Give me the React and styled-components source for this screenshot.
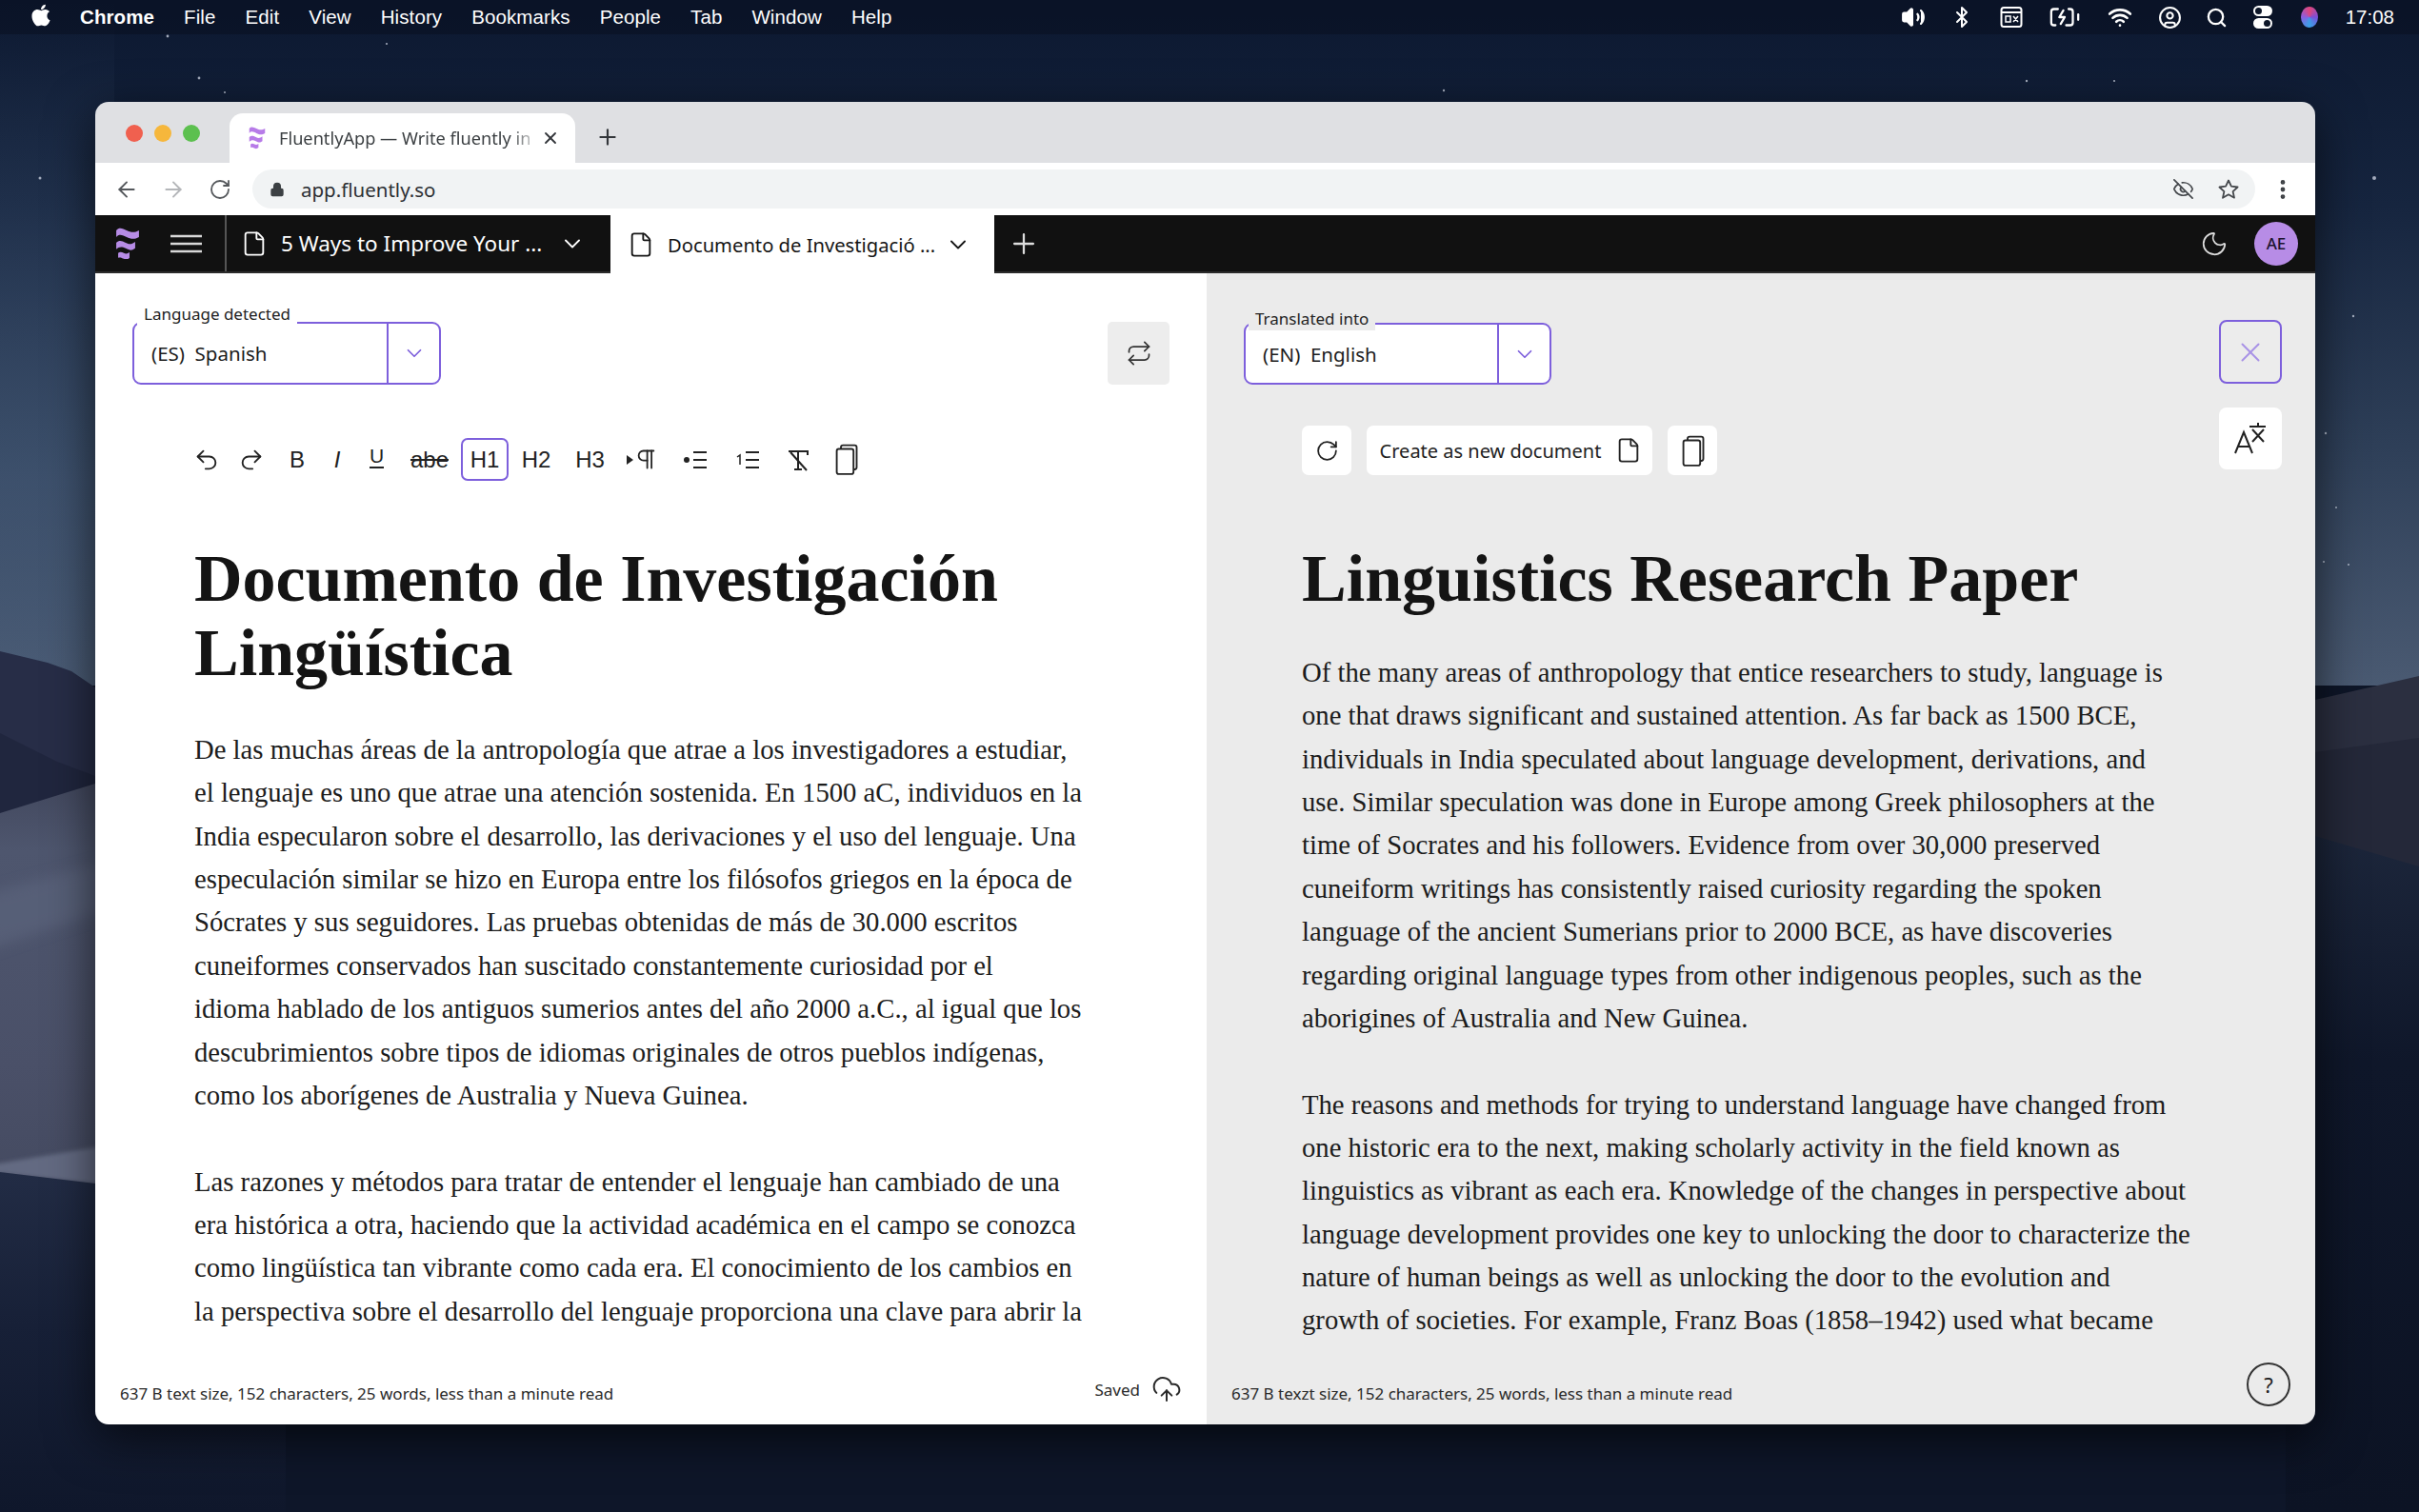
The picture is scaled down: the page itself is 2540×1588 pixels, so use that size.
import styled, { createGlobalStyle } from "styled-components";
import {
  ArrowLeft, ArrowRight, BatteryCharging, Bluetooth, ChevronDown, CircleUser, CloudUpload, EyeOff, File,
  Lock, Moon, MoreVertical, Pilcrow, Plus, Redo2, Repeat, RotateCw, Search, Undo2, Volume2, Wifi, X,
} from "lucide-react";
import { FaApple } from "react-icons/fa";

const Global = createGlobalStyle`
  html, body { margin: 0; padding: 0; background: #0e1628; }
  * { box-sizing: border-box; }
`;

const uiFont = `"Noto Sans", "Open Sans", sans-serif`;
const serifFont = `"Liberation Serif", serif`;
const purple = "#7d5fdc";

const Desktop = styled.div`
  position: relative;
  width: 2540px;
  height: 1588px;
  overflow: hidden;
  display: flex;
  flex-direction: column;
  font-family: ${uiFont};
`;

const Wallpaper = styled.svg`
  position: absolute;
  top: 0;
  left: 0;
  width: 100%;
  height: 100%;
`;

const MenuBar = styled.header`
  position: relative;
  height: 36px;
  flex: none;
  display: flex;
  align-items: center;
  justify-content: space-between;
  padding: 0 26px 0 30px;
  background: rgba(8, 14, 30, 0.5);
  color: #fff;
`;

const MenuLeft = styled.nav`
  display: flex;
  align-items: center;
  gap: 31px;
`;

const AppleMark = styled(FaApple)`
  width: 26px;
  height: 26px;
  margin-right: -3px;
  margin-top: -4px;
`;

const MenuItem = styled.span`
  font-family: "Liberation Sans", sans-serif;
  font-size: 20.5px;
  font-weight: ${(p) => (p.$bold ? 700 : 400)};
  letter-spacing: 0.1px;
`;

const MenuRight = styled.div`
  display: flex;
  align-items: center;
`;

const StatusSlot = styled.span`
  width: ${(p) => p.$w}px;
  display: flex;
  justify-content: center;
  align-items: center;
`;

const Siri = styled.span`
  width: 18px;
  height: 22px;
  border-radius: 50%;
  background: conic-gradient(#e0467c, #7a4fd8, #3aa0e8, #8a5fe0, #e0467c);
`;

const Clock = styled.span`
  margin-left: 14px;
  font-family: "Liberation Sans", sans-serif;
  font-size: 20.5px;
`;

const Window = styled.main`
  position: relative;
  margin: 71px 0 0 100px;
  width: 2331px;
  height: 1389px;
  display: flex;
  flex-direction: column;
  border-radius: 14px;
  overflow: hidden;
  box-shadow: 0 14px 50px rgba(0, 0, 0, 0.65);
`;

const TabStrip = styled.div`
  height: 64px;
  flex: none;
  display: flex;
  align-items: flex-end;
  background: #dfe0e3;
`;

const Lights = styled.div`
  display: flex;
  gap: 12px;
  align-self: flex-start;
  margin: 24px 31px 0 32px;
`;

const Light = styled.span`
  width: 18px;
  height: 18px;
  border-radius: 50%;
  background: ${(p) => p.$c};
`;

const BrowserTab = styled.div`
  width: 363px;
  height: 52px;
  display: flex;
  align-items: center;
  padding: 0 16px 0 20px;
  background: #fff;
  border-radius: 14px 14px 0 0;
`;

const TabTitle = styled.span`
  flex: 1;
  margin-left: 14px;
  white-space: nowrap;
  font-size: 18.2px;
  color: #3c4043;
  mask-image: linear-gradient(to right, #000 88%, transparent 100%);
`;

const NewTabButton = styled.span`
  display: flex;
  margin: 0 0 14px 21px;
  color: #33363a;
`;

const AddressRow = styled.div`
  height: 55px;
  flex: none;
  display: flex;
  align-items: center;
  padding-left: 8px;
  background: #fff;
`;

const NavIcon = styled.span`
  width: 49px;
  display: flex;
  justify-content: center;
  margin-right: ${(p) => p.$end || 0}px;
  color: ${(p) => (p.$off ? "#b4b6b9" : "#55585c")};
`;

const AddressPill = styled.div`
  width: 2103px;
  height: 41px;
  display: flex;
  align-items: center;
  padding: 0 16px 0 18px;
  border-radius: 21px;
  background: #f1f3f4;
  color: #3c4043;
`;

const Url = styled.span`
  flex: 1;
  margin-left: 17px;
  font-size: 20.5px;
  color: #2c2f33;
`;

const PillIcon = styled.span`
  display: flex;
  margin-left: 24px;
  color: #45484c;
`;

const MoreButton = styled.span`
  display: flex;
  margin-left: 16px;
  color: #3d4044;
`;

const AppBar = styled.div`
  height: 61px;
  flex: none;
  display: flex;
  align-items: stretch;
  background: #111;
  border-bottom: 2px solid #2b2b2b;
  color: #fff;
`;

const BrandBox = styled.div`
  width: 138px;
  display: flex;
  align-items: center;
  gap: 32px;
  padding-left: 21px;
  border-right: 2px solid #555;
  color: #d8d8d8;
`;

const DocTab = styled.div`
  width: ${(p) => p.$w}px;
  display: flex;
  align-items: center;
  padding-left: ${(p) => (p.$active ? 18 : 15)}px;
  background: ${(p) => (p.$active ? "#fff" : "#111")};
  color: ${(p) => (p.$active ? "#151515" : "#fff")};
  height: ${(p) => (p.$active ? "61px" : "auto")};
  position: relative;
`;

const DocTabName = styled.span`
  width: ${(p) => p.$w}px;
  margin-left: ${(p) => p.$gap}px;
  white-space: nowrap;
  font-size: ${(p) => p.$size}px;
`;

const AddDoc = styled.span`
  display: flex;
  align-items: center;
  margin-left: 14px;
  color: #ddd;
`;

const AppBarEnd = styled.div`
  margin-left: auto;
  display: flex;
  align-items: center;
  gap: 27px;
  padding-right: 18px;
  color: #ddd;
`;

const Avatar = styled.span`
  width: 46px;
  height: 46px;
  display: flex;
  align-items: center;
  justify-content: center;
  border-radius: 50%;
  background: #b78ce6;
  color: #1d1430;
  font-size: 17px;
  font-weight: 500;
`;

const Panels = styled.div`
  flex: 1;
  min-height: 0;
  display: grid;
  grid-template-columns: 1167px 1164px;
`;

const Panel = styled.section`
  position: relative;
  min-height: 0;
  display: flex;
  flex-direction: column;
  padding-top: ${(p) => p.$top}px;
  background: ${(p) => p.$bg};
`;

const PanelHead = styled.div`
  flex: none;
  display: flex;
  justify-content: space-between;
  padding: 0 39px;
`;

const SelectBox = styled.div`
  position: relative;
  width: ${(p) => p.$w}px;
  height: ${(p) => p.$h}px;
  display: flex;
  align-items: stretch;
  background: ${(p) => p.$fill};
  border: 2px solid ${purple};
  border-radius: 9px;
`;

const SelectLabel = styled.span`
  position: absolute;
  top: ${(p) => p.$top}px;
  left: 3px;
  padding: 0 7px;
  background: ${(p) => p.$bg};
  font-size: 17px;
  line-height: 24px;
  color: #222;
  white-space: nowrap;
`;

const SelectValue = styled.span`
  flex: 1;
  display: flex;
  align-items: center;
  padding-left: 18px;
  font-size: 20.5px;
  color: #1c1c1c;
  white-space: pre;
`;

const SelectArrow = styled.span`
  width: 55px;
  display: flex;
  align-items: center;
  justify-content: center;
  border-left: 2px solid ${purple};
  color: ${purple};
`;

const SwapButton = styled.button`
  width: 65px;
  height: 66px;
  display: flex;
  align-items: center;
  justify-content: center;
  padding: 0;
  border: 0;
  border-radius: 5px;
  background: #ededed;
  color: #333;
`;

const FormatBar = styled.div`
  flex: none;
  display: flex;
  align-items: center;
  height: 45px;
  margin: 56px 0 0 94px;
  color: #222;
`;

const FormatItem = styled.span`
  width: ${(p) => p.$w}px;
  height: 45px;
  display: flex;
  align-items: center;
  justify-content: center;
  font-family: "Liberation Sans", sans-serif;
  font-size: 24px;
  color: #222;
  border-radius: 7px;
  border: ${(p) => (p.$active ? `2px solid ${purple}` : "0")};
  font-style: ${(p) => (p.$italic ? "italic" : "normal")};
  text-decoration: ${(p) => p.$deco || "none"};
`;

const UnderlineMark = styled.span`
  border-bottom: 2px solid #222;
  font-size: 21px;
  line-height: 22px;
  margin-top: -6px;
`;

const Doc = styled.article`
  flex: 1;
  min-height: 0;
  overflow: hidden;
  padding-left: ${(p) => p.$left}px;
  margin-top: ${(p) => p.$top}px;
`;

const Title = styled.h1`
  margin: 0 0 ${(p) => p.$gap}px;
  font-family: ${serifFont};
  font-size: 70px;
  line-height: 78px;
  font-weight: 700;
  color: #141414;
  white-space: nowrap;
`;

const TitleLine = styled.span`
  display: block;
`;

const Para = styled.p`
  margin: 0 0 45.36px;
  font-family: ${serifFont};
  font-size: 28.7px;
  line-height: 45.36px;
  color: #1c1c1c;
`;

const ParaLine = styled.span`
  display: block;
  white-space: nowrap;
`;

const PanelFoot = styled.footer`
  height: 82px;
  flex: none;
  display: flex;
  align-items: center;
  justify-content: space-between;
  padding: 0 26px;
  font-size: 17px;
  color: #2a2a2a;
`;

const FootText = styled.span`
  padding-top: 16px;
`;

const SavedState = styled.span`
  display: flex;
  align-items: center;
  gap: 12px;
  padding-top: 8px;
`;

const HelpCircle = styled.span`
  width: 46px;
  height: 46px;
  display: flex;
  align-items: center;
  justify-content: center;
  border: 2px solid #333;
  border-radius: 50%;
  font-size: 22px;
  color: #222;
  margin-top: -2px;
`;

const ResultTools = styled.div`
  flex: none;
  display: flex;
  gap: 16px;
  height: 52px;
  margin: 43px 0 0 100px;
`;

const WhiteButton = styled.button`
  height: 52px;
  width: ${(p) => p.$w}px;
  display: flex;
  align-items: center;
  justify-content: center;
  gap: 15px;
  padding: 0 0 0 ${(p) => p.$shift || 0}px;
  border: 0;
  border-radius: 7px;
  background: #fff;
  font-family: ${uiFont};
  font-size: 20px;
  color: #222;
`;

const SideActions = styled.div`
  position: absolute;
  top: 49px;
  right: 35px;
  display: flex;
  flex-direction: column;
  gap: 25px;
`;

const SideButton = styled.button`
  width: 66px;
  height: ${(p) => p.$h}px;
  display: flex;
  align-items: center;
  justify-content: center;
  padding: 0;
  border: ${(p) => (p.$outlined ? `2px solid ${purple}` : "0")};
  border-radius: 8px;
  background: ${(p) => (p.$outlined ? "#ececec" : "#fff")};
  color: ${(p) => (p.$outlined ? "#a892e6" : "#222")};
`;

const sourceLines = [
  [
    "De las muchas áreas de la antropología que atrae a los investigadores a estudiar,",
    "el lenguaje es uno que atrae una atención sostenida. En 1500 aC, individuos en la",
    "India especularon sobre el desarrollo, las derivaciones y el uso del lenguaje. Una",
    "especulación similar se hizo en Europa entre los filósofos griegos en la época de",
    "Sócrates y sus seguidores. Las pruebas obtenidas de más de 30.000 escritos",
    "cuneiformes conservados han suscitado constantemente curiosidad por el",
    "idioma hablado de los antiguos sumerios antes del año 2000 a.C., al igual que los",
    "descubrimientos sobre tipos de idiomas originales de otros pueblos indígenas,",
    "como los aborígenes de Australia y Nueva Guinea.",
  ],
  [
    "Las razones y métodos para tratar de entender el lenguaje han cambiado de una",
    "era histórica a otra, haciendo que la actividad académica en el campo se conozca",
    "como lingüística tan vibrante como cada era. El conocimiento de los cambios en",
    "la perspectiva sobre el desarrollo del lenguaje proporciona una clave para abrir la",
  ],
];

const targetLines = [
  [
    "Of the many areas of anthropology that entice researchers to study, language is",
    "one that draws significant and sustained attention. As far back as 1500 BCE,",
    "individuals in India speculated about language development, derivations, and",
    "use. Similar speculation was done in Europe among Greek philosophers at the",
    "time of Socrates and his followers. Evidence from over 30,000 preserved",
    "cuneiform writings has consistently raised curiosity regarding the spoken",
    "language of the ancient Sumerians prior to 2000 BCE, as have discoveries",
    "regarding original language types from other indigenous peoples, such as the",
    "aborigines of Australia and New Guinea.",
  ],
  [
    "The reasons and methods for trying to understand language have changed from",
    "one historic era to the next, making scholarly activity in the field known as",
    "linguistics as vibrant as each era. Knowledge of the changes in perspective about",
    "language development provides one key to unlocking the door to characterize the",
    "nature of human beings as well as unlocking the door to the evolution and",
    "growth of societies. For example, Franz Boas (1858–1942) used what became",
  ],
];

const stars = [
  [176, 38, 1.4], [209, 82, 1.4], [236, 97, 1.1], [406, 46, 1.1], [42, 187, 1.5],
  [1516, 95, 1.2], [2128, 85, 1.2], [2220, 85, 1.1],
  [2493, 187, 2], [2471, 332, 1.2], [2442, 455, 1.2], [2453, 533, 1], [2440, 590, 1.1], [2466, 593, 1],
];

const Sky = () => (
  <Wallpaper viewBox="0 0 2540 1588" preserveAspectRatio="none">
    <defs>
      <linearGradient id="sky" x1="0" y1="0" x2="0" y2="1">
        <stop offset="0" stopColor="#0c1830" />
        <stop offset="0.3" stopColor="#16253f" />
        <stop offset="0.65" stopColor="#2e3f58" />
        <stop offset="1" stopColor="#4a5a72" />
      </linearGradient>
      <linearGradient id="skyLeft" x1="0" y1="0" x2="0" y2="1">
        <stop offset="0" stopColor="#4d6484" stopOpacity="0" />
        <stop offset="0.7" stopColor="#4d6484" stopOpacity="0.4" />
        <stop offset="1" stopColor="#4d6484" stopOpacity="0.2" />
      </linearGradient>
      <linearGradient id="duneLeft" x1="0" y1="0" x2="0" y2="1">
        <stop offset="0" stopColor="#3d4257" />
        <stop offset="0.22" stopColor="#4e566e" />
        <stop offset="0.7" stopColor="#4a5068" />
        <stop offset="1" stopColor="#444a60" />
      </linearGradient>
      <linearGradient id="floor" x1="0" y1="0" x2="0" y2="1">
        <stop offset="0" stopColor="#222c45" />
        <stop offset="0.45" stopColor="#172037" />
        <stop offset="1" stopColor="#0f172b" />
      </linearGradient>
      <linearGradient id="floorRight" x1="0" y1="0" x2="0" y2="1">
        <stop offset="0" stopColor="#1d273c" />
        <stop offset="0.35" stopColor="#0f172a" />
        <stop offset="1" stopColor="#0c1324" />
      </linearGradient>
      <filter id="soft"><feGaussianBlur stdDeviation="7" /></filter>
      <filter id="softer"><feGaussianBlur stdDeviation="2" /></filter>
    </defs>
    <rect width="2540" height="720" fill="url(#sky)" />
    <rect width="120" height="720" fill="url(#skyLeft)" />
    <path d="M0 684 L50 696 L75 705 L100 722 L400 780 V900 H0 Z" fill="#272d47" />
    <path d="M0 770 L60 800 L100 815 L400 830 V900 H0 Z" fill="#20263e" />
    <path d="M2200 780 L2431 735 L2540 710 V920 H2200 Z" fill="#2b2f40" />
    <path d="M2300 800 L2431 790 L2540 775 V920 H2300 Z" fill="#242839" />
    <path d="M0 854 L100 823 L400 790 V1260 H0 Z" fill="url(#duneLeft)" />
    <path d="M-20 940 L100 908 L300 880 V950 L100 960 L-20 1000 Z" fill="#5f6780" opacity="0.55" filter="url(#soft)" />
    <path d="M-20 1225 L100 1205 L400 1190 V1250 L100 1243 L-20 1230 Z" fill="#646b82" filter="url(#softer)" />
    <path d="M0 1231 L100 1243 L400 1260 V1588 H0 Z" fill="url(#floor)" />
    <path d="M2300 860 L2431 878 L2540 910 V1588 H2300 Z" fill="url(#floorRight)" />
    <rect x="300" y="1400" width="2100" height="188" fill="#0e1629" />
    {stars.map(([cx, cy, r]) => (
      <circle key={`${cx}-${cy}`} cx={cx} cy={cy} r={r} fill="#dfe6f2" opacity="0.7" />
    ))}
  </Wallpaper>
);

const Flag = ({ size, color }) => (
  <svg width={size} height={size * 1.3} viewBox="0 0 26 34" fill={color}>
    <path d="M1 3C4-1 8 1 12 3s8 3 13 0v7c-5 3-9 2-13 0S4 6 1 10z" />
    <path d="M1 16c3-3 6-2 10 0s6 2 10-1v7c-4 3-6 2-10 0s-7-2-10 1z" />
    <path d="M3 27c2-2 4-1 6 0s4 1 6-1v6c-2 2-4 2-6 1s-4-2-6-1z" />
  </svg>
);

const Burger = () => (
  <svg width="33" height="20" viewBox="0 0 33 20" fill="none" stroke="currentColor" strokeWidth="2.6">
    <path d="M0 2h33M0 10h33M0 18h33" />
  </svg>
);

const Copies = ({ size = 33 }) => (
  <svg width={size} height={size} viewBox="0 0 30 30" fill="none" stroke="currentColor" strokeWidth="1.7">
    <path d="M10 4.5V3.5a2 2 0 0 1 2-2h11a2 2 0 0 1 2 2v19a2 2 0 0 1-2 2h-1" />
    <rect x="6" y="5" width="16" height="24" rx="2" fill="transparent" />
  </svg>
);

const BulletList = () => (
  <svg width="26" height="22" viewBox="0 0 26 22" fill="none" stroke="currentColor" strokeWidth="2">
    <circle cx="4" cy="11" r="3" fill="currentColor" stroke="none" />
    <path d="M11 3h14M11 11h14M11 19h14" />
  </svg>
);

const NumberList = () => (
  <svg width="26" height="22" viewBox="0 0 26 22" fill="none" stroke="currentColor" strokeWidth="2">
    <path d="M2 8l3-2v10" strokeWidth="1.5" />
    <path d="M11 3h14M11 11h14M11 19h14" />
  </svg>
);

const ClearFormat = () => (
  <svg width="26" height="26" viewBox="0 0 26 26" fill="none" stroke="currentColor" strokeWidth="2">
    <path d="M3 4h20v4M13 4v19M9 23h8" />
    <path d="M5 5l17 19" />
  </svg>
);

const ParaMark = () => (
  <>
    <svg width="7" height="10" viewBox="0 0 7 10" fill="currentColor">
      <path d="M0 0l7 5-7 5z" />
    </svg>
    <Pilcrow size={27} strokeWidth={1.6} />
  </>
);

const TranslateOff = () => (
  <svg width="38" height="38" viewBox="0 0 38 38" fill="none" stroke="currentColor" strokeWidth="2">
    <path d="M3 34l9-22 9 22M6.5 27h11" />
    <path d="M18 6h17M27 2v4M21 9l12 13M33 9L21 22" />
  </svg>
);

const BoxIcon = () => (
  <svg width="24" height="24" viewBox="0 0 24 24" fill="none" stroke="currentColor" strokeWidth="2">
    <rect x="1.5" y="2" width="21" height="20" rx="2.5" />
    <path d="M2 7h20" />
    <path d="M6 11h5v6H6zM14 11l5 6M19 11l-5 6" strokeWidth="1.5" />
  </svg>
);

const ToggleIcon = () => (
  <svg width="24" height="26" viewBox="0 0 24 26" fill="#fff">
    <rect x="2" y="1" width="20" height="11" rx="5.5" />
    <rect x="2" y="14" width="20" height="11" rx="5.5" />
    <circle cx="7.5" cy="6.5" r="3.5" fill="#0d1628" />
    <circle cx="16.5" cy="19.5" r="3.5" fill="#0d1628" />
  </svg>
);

const menuNames = ["File", "Edit", "View", "History", "Bookmarks", "People", "Tab", "Window", "Help"];

const Select = ({ w, h, fill, label, labelTop, labelBg, value }) => (
  <SelectBox $w={w} $h={h} $fill={fill}>
    <SelectLabel $top={labelTop} $bg={labelBg}>{label}</SelectLabel>
    <SelectValue>{value}</SelectValue>
    <SelectArrow><ChevronDown size={26} strokeWidth={1.6} /></SelectArrow>
  </SelectBox>
);

export default function App() {
  return (
    <Desktop>
      <Global />
      <Sky />
      <MenuBar>
        <MenuLeft>
          <AppleMark />
          <MenuItem $bold>Chrome</MenuItem>
          {menuNames.map((name) => <MenuItem key={name}>{name}</MenuItem>)}
        </MenuLeft>
        <MenuRight>
          <StatusSlot $w={52}><Volume2 size={26} fill="currentColor" /></StatusSlot>
          <StatusSlot $w={51}><Bluetooth size={24} /></StatusSlot>
          <StatusSlot $w={53}><BoxIcon /></StatusSlot>
          <StatusSlot $w={59}><BatteryCharging size={34} strokeWidth={1.6} /></StatusSlot>
          <StatusSlot $w={56}><Wifi size={26} strokeWidth={2.4} /></StatusSlot>
          <StatusSlot $w={50}><CircleUser size={25} /></StatusSlot>
          <StatusSlot $w={48}><Search size={23} strokeWidth={2.4} /></StatusSlot>
          <StatusSlot $w={49}><ToggleIcon /></StatusSlot>
          <StatusSlot $w={48}><Siri /></StatusSlot>
          <Clock>17:08</Clock>
        </MenuRight>
      </MenuBar>

      <Window>
        <TabStrip>
          <Lights>
            <Light $c="#f0604f" />
            <Light $c="#f6b73c" />
            <Light $c="#5cc04f" />
          </Lights>
          <BrowserTab>
            <Flag size={18} color="#b77be8" />
            <TabTitle>FluentlyApp — Write fluently in</TabTitle>
            <X size={20} strokeWidth={2.2} color="#33363a" />
          </BrowserTab>
          <NewTabButton><Plus size={26} strokeWidth={2} /></NewTabButton>
        </TabStrip>

        <AddressRow>
          <NavIcon><ArrowLeft size={26} strokeWidth={1.8} /></NavIcon>
          <NavIcon $off><ArrowRight size={26} strokeWidth={1.8} /></NavIcon>
          <NavIcon $end={10}><RotateCw size={24} strokeWidth={1.8} /></NavIcon>
          <AddressPill>
            <Lock size={16} fill="currentColor" />
            <Url>app.fluently.so</Url>
            <PillIcon><EyeOff size={23} strokeWidth={1.8} /></PillIcon>
            <PillIcon><svg width="24" height="24" viewBox="0 0 24 24" fill="none" stroke="currentColor" strokeWidth="1.8" strokeLinejoin="round"><path d="M12 2.5l2.9 6.2 6.7.8-5 4.6 1.4 6.6-6-3.4-6 3.4 1.4-6.6-5-4.6 6.7-.8z" /></svg></PillIcon>
          </AddressPill>
          <MoreButton><MoreVertical size={26} strokeWidth={2.4} /></MoreButton>
        </AddressRow>

        <AppBar>
          <BrandBox>
            <Flag size={26} color="#b78ce6" />
            <Burger />
          </BrandBox>
          <DocTab $w={403}>
            <File size={28} strokeWidth={1.6} />
            <DocTabName $w={292} $gap={14} $size={22.5}>5 Ways to Improve Your ...</DocTabName>
            <ChevronDown size={28} strokeWidth={1.6} />
          </DocTab>
          <DocTab $w={403} $active>
            <File size={28} strokeWidth={1.6} />
            <DocTabName $w={291} $gap={14} $size={20.2}>Documento de Investigació ...</DocTabName>
            <ChevronDown size={28} strokeWidth={1.6} />
          </DocTab>
          <AddDoc><Plus size={34} strokeWidth={1.6} /></AddDoc>
          <AppBarEnd>
            <Moon size={30} strokeWidth={1.4} />
            <Avatar>AE</Avatar>
          </AppBarEnd>
        </AppBar>

        <Panels>
          <Panel $top={51} $bg="#fff">
            <PanelHead>
              <Select w={324} h={66} fill="#fff" label="Language detected" labelTop={-22} labelBg="#fff" value="(ES)  Spanish" />
              <SwapButton><Repeat size={28} strokeWidth={1.5} /></SwapButton>
            </PanelHead>
            <FormatBar>
              <FormatItem $w={45}><Undo2 size={28} strokeWidth={1.6} /></FormatItem>
              <FormatItem $w={50}><Redo2 size={28} strokeWidth={1.6} /></FormatItem>
              <FormatItem $w={46}>B</FormatItem>
              <FormatItem $w={38} $italic>I</FormatItem>
              <FormatItem $w={45}><UnderlineMark>U</UnderlineMark></FormatItem>
              <FormatItem $w={66} $deco="line-through">abe</FormatItem>
              <FormatItem $w={50} $active>H1</FormatItem>
              <FormatItem $w={58}>H2</FormatItem>
              <FormatItem $w={55}>H3</FormatItem>
              <FormatItem $w={55}><ParaMark /></FormatItem>
              <FormatItem $w={56}><BulletList /></FormatItem>
              <FormatItem $w={54}><NumberList /></FormatItem>
              <FormatItem $w={51}><ClearFormat /></FormatItem>
              <FormatItem $w={50}><Copies /></FormatItem>
            </FormatBar>
            <Doc $left={104} $top={64}>
              <Title $gap={40}>
                <TitleLine>Documento de Investigación</TitleLine>
                <TitleLine>Lingüística</TitleLine>
              </Title>
              {sourceLines.map((para, i) => (
                <Para key={i}>{para.map((line) => <ParaLine key={line}>{line}</ParaLine>)}</Para>
              ))}
            </Doc>
            <PanelFoot>
              <FootText>637 B text size, 152 characters, 25 words, less than a minute read</FootText>
              <SavedState>Saved <CloudUpload size={32} strokeWidth={1.5} /></SavedState>
            </PanelFoot>
          </Panel>

          <Panel $top={52} $bg="#ebebeb">
            <PanelHead>
              <Select w={323} h={65} fill="#fff" label="Translated into" labelTop={-18} labelBg="#ebebeb" value="(EN)  English" />
            </PanelHead>
            <SideActions>
              <SideButton $h={67} $outlined><X size={34} strokeWidth={1.4} /></SideButton>
              <SideButton $h={65}><TranslateOff /></SideButton>
            </SideActions>
            <ResultTools>
              <WhiteButton $w={52}><RotateCw size={25} strokeWidth={1.7} /></WhiteButton>
              <WhiteButton $w={300} $shift={3}>Create as new document <File size={28} strokeWidth={1.6} /></WhiteButton>
              <WhiteButton $w={52}><Copies /></WhiteButton>
            </ResultTools>
            <Doc $left={100} $top={70}>
              <Title $gap={37}><TitleLine>Linguistics Research Paper</TitleLine></Title>
              {targetLines.map((para, i) => (
                <Para key={i}>{para.map((line) => <ParaLine key={line}>{line}</ParaLine>)}</Para>
              ))}
            </Doc>
            <PanelFoot>
              <FootText>637 B texzt size, 152 characters, 25 words, less than a minute read</FootText>
              <HelpCircle>?</HelpCircle>
            </PanelFoot>
          </Panel>
        </Panels>
      </Window>
    </Desktop>
  );
}
